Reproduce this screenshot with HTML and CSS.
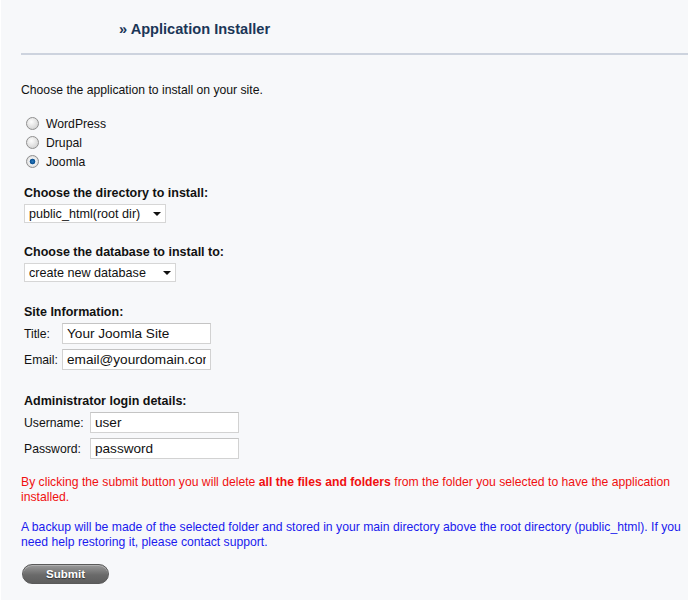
FILE: index.html
```html
<!DOCTYPE html>
<html>
<head>
<title>Application Installer</title>
<link rel="stylesheet" href="styles.css">
</head>
<body>
<div class="page">
<div class="header">
<h1 class="title">&raquo; Application Installer</h1>
</div>
<div class="divider"></div>
<form class="content" onsubmit="return false;">
<p class="intro">Choose the application to install on your site.</p>
<div class="apps">
<label class="app"><input type="radio" name="app" value="wordpress"> WordPress</label>
<label class="app"><input type="radio" name="app" value="drupal"> Drupal</label>
<label class="app"><input type="radio" name="app" value="joomla" checked> Joomla</label>
</div>
<div class="section first">
<div class="heading">Choose the directory to install:</div>
<span class="dropdown dir"><select>
<option>public_html(root dir)</option>
</select></span>
</div>
<div class="section">
<div class="heading">Choose the database to install to:</div>
<span class="dropdown db"><select>
<option>create new database</option>
</select></span>
</div>
<div class="section site-info">
<div class="heading">Site Information:</div>
<div class="fields site">
<label>Title:</label>
<input type="text" value="Your Joomla Site">
<label>Email:</label>
<input type="text" value="email@yourdomain.com">
</div>
</div>
<div class="section admin-info">
<div class="heading">Administrator login details:</div>
<div class="fields admin">
<label>Username:</label>
<input type="text" value="user">
<label>Password:</label>
<input type="text" value="password">
</div>
</div>
<p class="warning">By clicking the submit button you will delete <b>all the files and folders</b> from the folder you selected to have the application installed.</p>
<p class="notice">A backup will be made of the selected folder and stored in your main directory above the root directory (public_html). If you need help restoring it, please contact support.</p>
<button class="submit" type="submit">Submit</button>
</form>
</div>
</body>
</html>
```

FILE: styles.css
```css
html, body {
margin: 0;
background: #f7f8fa;
}
.page {
min-height: 600px;
border-left: 1px solid #fff;
font-family: "Liberation Sans", Arial, sans-serif;
font-size: 12.2px;
color: #111;
}
.header {
height: 53px;
padding-left: 118px;
box-sizing: border-box;
}
.title {
margin: 0;
padding-top: 21px;
font-size: 14.6px;
line-height: 17px;
color: #1b3657;
}
.divider {
margin-left: 20px;
height: 2px;
background: #cdd3de;
}
.content {
padding: 0 4px 0 20px;
}
.intro {
margin: 28px 0 0;
line-height: 14px;
}
.apps {
margin-top: 17px;
}
.app {
display: flex;
align-items: center;
height: 19px;
}
.app input {
appearance: none;
-webkit-appearance: none;
box-sizing: border-box;
margin: 0 7px 0 5px;
width: 13px;
height: 13px;
border: 1px solid #8f8f8f;
border-radius: 50%;
background: radial-gradient(circle at 40% 35%, #fdfdfd, #d8d8d8 70%, #c4c4c4);
}
.app input:checked {
background: radial-gradient(circle, #2a7bc0 0, #0a4f8f 2.5px, #f4f4f4 3.2px, #dadada 6px);
}
.section {
margin-top: 22px;
padding-left: 3px;
}
.section.first {
margin-top: 15px;
}
.section.site-info {
margin-top: 23px;
}
.section.admin-info {
margin-top: 24px;
}
.heading {
font-weight: bold;
font-size: 12.5px;
line-height: 14px;
margin-bottom: 4px;
}
.dropdown {
position: relative;
display: inline-block;
}
.dropdown select {
appearance: none;
-webkit-appearance: none;
height: 19px;
padding: 0 16px 0 4px;
border: 1px solid #d6d6d6;
border-radius: 0;
background: #fff;
font-family: "Liberation Sans", Arial, sans-serif;
font-size: 12.6px;
color: #111;
}
.dropdown::after {
content: "";
position: absolute;
right: 5px;
top: 8px;
border-left: 4px solid transparent;
border-right: 4px solid transparent;
border-top: 4px solid #111;
pointer-events: none;
}
.dir select {
width: 142px;
}
.db select {
width: 152px;
}
.fields {
display: grid;
column-gap: 4px;
row-gap: 5px;
align-items: center;
}
.fields.site {
grid-template-columns: 34px 149px;
}
.fields.admin {
grid-template-columns: 62px 149px;
}
.fields input {
box-sizing: border-box;
width: 149px;
height: 21px;
padding: 0 4px;
border: 1px solid #d2d2d2;
border-top-color: #c4c4c4;
background: #fff;
font-family: "Liberation Sans", Arial, sans-serif;
font-size: 13.6px;
color: #111;
}
.warning {
margin: 16px 0 0;
line-height: 15px;
color: #f01010;
}
.notice {
margin: 15px 0 0;
line-height: 15px;
color: #1a1aee;
}
.submit {
display: block;
margin: 14px 0 0 1px;
width: 87px;
height: 20px;
padding: 0;
border: 1px solid #5a5a5a;
border-radius: 10px;
background: linear-gradient(#9a9a9a, #6a6a6a 55%, #5e5e5e);
box-shadow: inset 0 1px 0 #b0b0b0;
font-family: "Liberation Sans", Arial, sans-serif;
font-size: 11.5px;
font-weight: bold;
color: #fff;
text-shadow: 0 1px 1px #333;
}
```
